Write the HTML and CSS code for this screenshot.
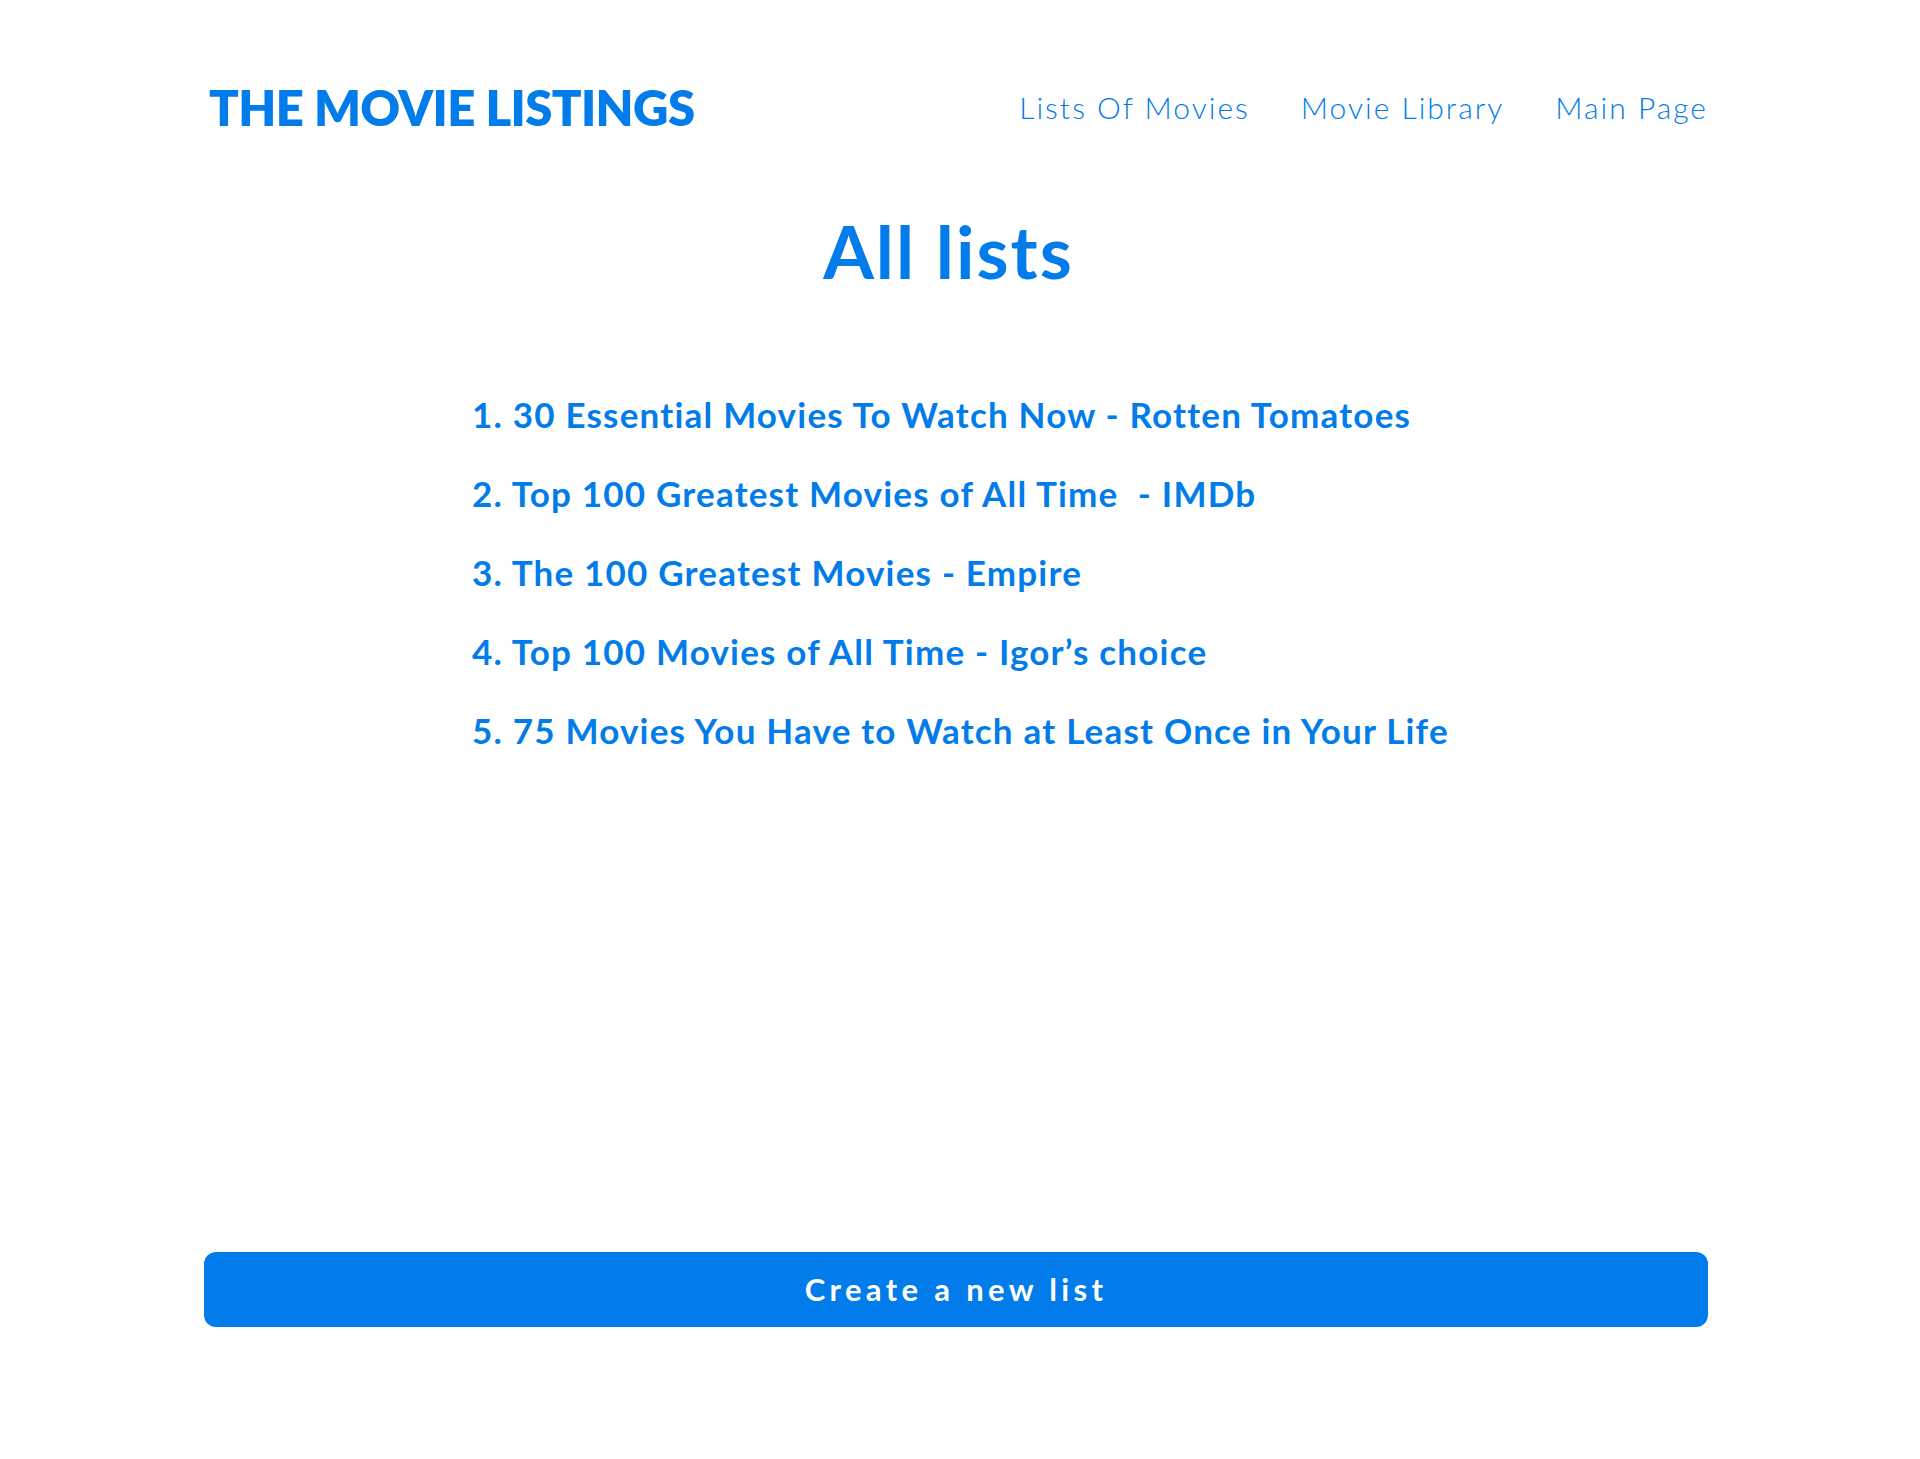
FILE: index.html
```html
<!DOCTYPE html>
<html lang="en">
<head>
<meta charset="utf-8">
<title>The Movie Listings - All lists</title>
<link rel="stylesheet" href="styles.css">
</head>
<body>
<div class="page">
  <header class="site-header">
    <a class="brand" href="#">THE MOVIE LISTINGS</a>
    <nav class="nav">
      <a href="#">Lists Of Movies</a>
      <a href="#">Movie Library</a>
      <a href="#">Main Page</a>
    </nav>
  </header>
  <main class="content">
    <h1 class="page-title">All lists</h1>
    <ol class="lists">
      <li><a href="#">1. 30 Essential Movies To Watch Now - Rotten Tomatoes</a></li>
      <li><a href="#">2. Top 100 Greatest Movies of All Time &nbsp;- IMDb</a></li>
      <li><a href="#">3. The 100 Greatest Movies - Empire</a></li>
      <li><a href="#">4. Top 100 Movies of All Time - Igor’s choice</a></li>
      <li><a href="#">5. 75 Movies You Have to Watch at Least Once in Your Life</a></li>
    </ol>
  </main>
  <button class="create-btn" type="button">Create a new list</button>
</div>
</body>
</html>
```

FILE: styles.css
```css
* { box-sizing: border-box; }
html, body { background: #ffffff; }
body {
  margin: 0;
  padding: 0 8px 0 0;
  font-family: "Lato", "Open Sans", sans-serif;
  color: #017cea;
}
a { color: inherit; text-decoration: none; }

.page {
  width: 1504px;
  margin: 0 auto;
}

.site-header {
  display: flex;
  align-items: center;
  justify-content: space-between;
  padding: 77px 0 0 5px;
  height: 137px;
}
.brand {
  font-size: 49px;
  line-height: 60px;
  font-weight: 800;
  letter-spacing: -0.6px;
}
.nav {
  display: flex;
  gap: 51px;
}
.nav a {
  font-size: 30px;
  line-height: 60px;
  font-weight: 300;
  letter-spacing: 2px;
}

.content { margin: 0; }
.page-title {
  margin: 71px 0 0;
  text-align: center;
  font-size: 73px;
  line-height: 86px;
  font-weight: 700;
  letter-spacing: 2px;
  padding-right: 15px;
}
.lists {
  list-style: none;
  margin: 96px 0 0;
  padding: 0 0 0 268px;
}
.lists li {
  font-size: 35px;
  line-height: 48px;
  font-weight: 700;
  letter-spacing: 1.2px;
  margin-bottom: 31px;
}
.lists li:last-child { margin-bottom: 0; }

.create-btn {
  display: block;
  width: 100%;
  height: 75px;
  margin: 498px 0 0;
  border: 0;
  border-radius: 12px;
  background: #017cea;
  color: #ffffff;
  font-family: "Lato", "Open Sans", sans-serif;
  font-size: 31px;
  line-height: 75px;
  font-weight: 700;
  letter-spacing: 4.35px;
  padding: 0;
  cursor: pointer;
}
```
